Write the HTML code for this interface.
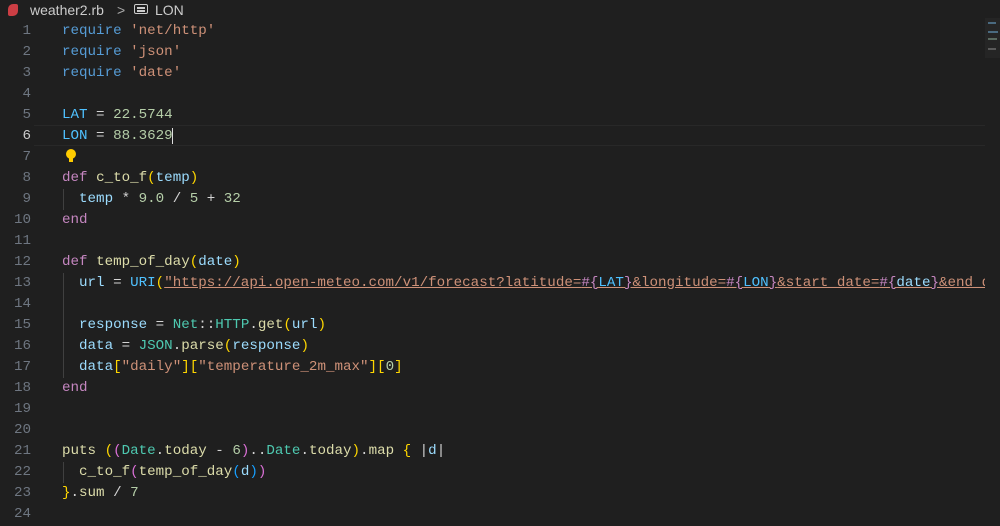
<!DOCTYPE html><html><head><style>
body{margin:0;width:1000px;height:526px;background:#1f1f1f;overflow:hidden;position:relative;font-family:"Liberation Mono",monospace}
.bc{position:absolute;top:0;left:0;height:20px;font:14px "Liberation Sans",sans-serif;color:#cccccc;line-height:20px}
.ln{position:absolute;left:0;width:31px;text-align:right;color:#6e7681;font-size:14.2px;line-height:21px}
.code{position:absolute;left:62px;top:21px;width:923px;overflow:hidden;font-size:14.2px;line-height:21px;color:#d4d4d4;white-space:pre}
.k{color:#569cd6}.p{color:#c586c0}.s{color:#ce9178}.c{color:#4fc1ff}.n{color:#b5cea8}.f{color:#dcdcaa}.v{color:#9cdcfe}.t{color:#4ec9b0}.y{color:#ffd700}.m{color:#da70d6}.b{color:#179fff}
.cur{position:absolute;left:34px;top:125px;width:951px;height:19px;border-top:1px solid #282828;border-bottom:1px solid #282828}
.guide{position:absolute;left:63px;width:1px;background:#404040}
</style></head><body>
<div class="bc"><span style="position:absolute;left:8px;top:4px;width:10px;height:12px;background:#cc3e44;border-radius:5px 2px 5px 2px"></span><span style="position:absolute;left:30px">weather2.rb</span><span style="position:absolute;left:117px;color:#aaa">&gt;</span><span style="position:absolute;left:134px;top:4px;width:14px;height:10px;border:1.5px solid #ccc;border-radius:2px;box-sizing:border-box"></span><span style="position:absolute;left:137px;top:7px;width:8px;height:1.5px;background:#ccc"></span><span style="position:absolute;left:137px;top:10px;width:8px;height:1.5px;background:#ccc"></span><span style="position:absolute;left:155px">LON</span></div>
<div class="cur"></div>
<div class="guide" style="top:189px;height:21px"></div>
<div class="guide" style="top:273px;height:105px"></div>
<div class="guide" style="top:462px;height:21px"></div>
<div class="ln" style="top:21px">1<br>2<br>3<br>4<br>5<br><span style="color:#ccc">6</span><br>7<br>8<br>9<br>10<br>11<br>12<br>13<br>14<br>15<br>16<br>17<br>18<br>19<br>20<br>21<br>22<br>23<br>24</div>
<div style="position:absolute;left:66px;top:149px;width:10px;height:10px;border-radius:50%;background:#ffcc00"></div>
<div style="position:absolute;left:69px;top:158px;width:4px;height:4px;background:#ffcc00"></div>
<div class="code"><span class="k">require</span> <span class="s">'net/http'</span>
<span class="k">require</span> <span class="s">'json'</span>
<span class="k">require</span> <span class="s">'date'</span>

<span class="c">LAT</span> = <span class="n">22.5744</span>
<span class="c">LON</span> = <span class="n">88.3629</span><span style="border-left:1.5px solid #ddd;margin-left:-1px"> </span>

<span class="p">def</span> <span class="f">c_to_f</span><span class="y">(</span><span class="v">temp</span><span class="y">)</span>
  <span class="v">temp</span> * <span class="n">9.0</span> / <span class="n">5</span> + <span class="n">32</span>
<span class="p">end</span>

<span class="p">def</span> <span class="f">temp_of_day</span><span class="y">(</span><span class="v">date</span><span class="y">)</span>
  <span class="v">url</span> = <span class="c">URI</span><span class="y">(</span><span class="s" style="text-decoration:underline;text-decoration-color:#ce9178">"https://api.open-meteo.com/v1/forecast?latitude=<span class="p">#{</span><span class="c">LAT</span><span class="p">}</span>&amp;longitude=<span class="p">#{</span><span class="c">LON</span><span class="p">}</span>&amp;start_date=<span class="p">#{</span><span class="v">date</span><span class="p">}</span>&amp;end_date=#{date}&amp;daily=temperature_2m_max"</span>

  <span class="v">response</span> = <span class="t">Net</span>::<span class="t">HTTP</span>.<span class="f">get</span><span class="y">(</span><span class="v">url</span><span class="y">)</span>
  <span class="v">data</span> = <span class="t">JSON</span>.<span class="f">parse</span><span class="y">(</span><span class="v">response</span><span class="y">)</span>
  <span class="v">data</span><span class="y">[</span><span class="s">"daily"</span><span class="y">][</span><span class="s">"temperature_2m_max"</span><span class="y">][</span><span class="n">0</span><span class="y">]</span>
<span class="p">end</span>


<span class="f">puts</span> <span class="y">(</span><span class="m">(</span><span class="t">Date</span>.<span class="f">today</span> - <span class="n">6</span><span class="m">)</span>..<span class="t">Date</span>.<span class="f">today</span><span class="y">)</span>.<span class="f">map</span> <span class="y">{</span> |<span class="v">d</span>|
  <span class="f">c_to_f</span><span class="m">(</span><span class="f">temp_of_day</span><span class="b">(</span><span class="v">d</span><span class="b">)</span><span class="m">)</span>
<span class="y">}</span>.<span class="f">sum</span> / <span class="n">7</span>
</div>
<div style="position:absolute;left:985px;top:18px;width:15px;height:40px;background:#252525"></div>
<div style="position:absolute;left:988px;top:22px;width:8px;height:2px;background:#4a6a80"></div>
<div style="position:absolute;left:988px;top:31px;width:10px;height:2px;background:#4a6a80"></div>
<div style="position:absolute;left:988px;top:38px;width:9px;height:2px;background:#5a6a60"></div>
<div style="position:absolute;left:988px;top:48px;width:8px;height:2px;background:#5a5a5a"></div>
</body></html>
